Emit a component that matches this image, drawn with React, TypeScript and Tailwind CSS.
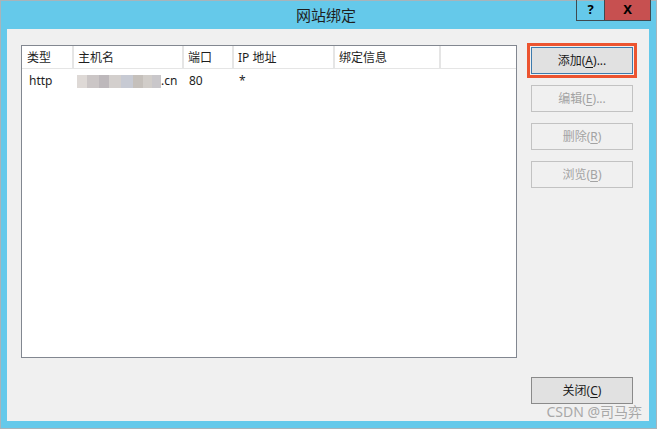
const font = { fontFamily: '"Noto Sans", "Noto Sans CJK SC", sans-serif' }

const columns = [
  { label: "类型", w: "w-[52px]", pl: "pl-[5px]" },
  { label: "主机名", w: "w-[110px]", pl: "pl-[4px]" },
  { label: "端口", w: "w-[50px]", pl: "pl-[4px]" },
  { label: "IP 地址", w: "w-[101px]", pl: "pl-[4px]" },
  { label: "绑定信息", w: "w-[106px]", pl: "pl-[4px]" },
]

function Key({ children }: { children: string }) {
  return <span className="underline underline-offset-2">{children}</span>
}

function SideButton({
  label,
  hotkey,
  dots,
  disabled,
  focused,
}: {
  label: string
  hotkey: string
  dots?: boolean
  disabled?: boolean
  focused?: boolean
}) {
  const base = "h-[27px] w-[102px] flex items-center justify-center text-[12px] border"
  const look = disabled
    ? "border-[#c2c2c2] bg-[#f0f0f0] text-[#a3a3a3]"
    : focused
      ? "border-[#3d7bad] bg-[#e1e1e1] text-[#1a1a1a] outline-[3px] outline-solid outline-[#ec5430] outline-offset-[1px]"
      : "border-[#8a8a8a] bg-[#e1e1e1] text-[#1a1a1a]"
  return (
    <div className={`${base} ${look}`}>
      {label}(<Key>{hotkey}</Key>){dots ? "..." : ""}
    </div>
  )
}

export default function App() {
  return (
    <div className="w-[657px] h-[429px] overflow-hidden bg-white" style={font}>
      <div className="relative w-[657px] h-[429px] border border-[#a8b4ba] bg-[#65c9ea] flex flex-col">
        {/* title bar */}
        <div className="h-[28px] grid grid-cols-[1fr_auto_1fr] pr-[5px]">
          <div />
          <div className="pt-[4px] text-[15px] leading-[20px] text-[#1e1e1e]">网站绑定</div>
          <div className="flex justify-end items-start">
            <div className="flex h-[21px] -mt-[1px] border border-t-0 border-[#3f4a50]">
              <div className="w-[28px] flex items-center justify-center text-[13px] font-bold text-black border-r border-[#3f4a50]">
                ?
              </div>
              <div className="w-[45px] flex items-center justify-center bg-[#c75050] text-[13px] font-bold text-black">
                X
              </div>
            </div>
          </div>
        </div>

        {/* content */}
        <div className="flex-1 ml-[6px] mr-[7px] mb-[7px] bg-[#f0f0f0] flex pl-[14px] pt-[16px] pr-[15px] pb-[17px]">
          <div className="w-[496px] h-[313px] border border-[#828790] bg-white">
            <div className="flex h-[23px] border-b border-[#e5e5e5]">
              {columns.map((c) => (
                <div
                  key={c.label}
                  className={`${c.w} ${c.pl} pt-[1px] border-r-2 border-[#e5e5e5] text-[12px] leading-[22px] text-[#1e1e1e]`}
                >
                  {c.label}
                </div>
              ))}
            </div>
            <div className="flex h-[22px] pt-[2px] items-center text-[12px] text-[#1e1e1e]">
              <div className="w-[52px] pl-[7px]">http</div>
              <div className="w-[110px] pl-[3px] flex items-center">
                <div className="flex h-[13px]">
                  <span className="w-[10px] bg-[#ded9d6]" />
                  <span className="w-[12px] bg-[#cbc6c6]" />
                  <span className="w-[10px] bg-[#bdb8bb]" />
                  <span className="w-[12px] bg-[#d3cfcd]" />
                  <span className="w-[12px] bg-[#c7cad3]" />
                  <span className="w-[10px] bg-[#c5c0bb]" />
                  <span className="w-[9px] bg-[#d1cdc9]" />
                  <span className="w-[9px] bg-[#c9c7ca]" />
                </div>
                <span>.cn</span>
              </div>
              <div className="w-[50px] pl-[5px]">80</div>
              <div className="w-[101px] pl-[5px]">*</div>
            </div>
          </div>

          <div className="ml-[14px] pt-[2px] flex flex-col">
            <div className="flex flex-col gap-[11px]">
              <SideButton label="添加" hotkey="A" dots focused />
              <SideButton label="编辑" hotkey="E" dots disabled />
              <SideButton label="删除" hotkey="R" disabled />
              <SideButton label="浏览" hotkey="B" disabled />
            </div>
            <div className="mt-auto">
              <SideButton label="关闭" hotkey="C" />
            </div>
          </div>
        </div>

        <div className="absolute right-[14px] bottom-[8px] text-[14px] leading-[16px] text-[#a8a8a8]">
          CSDN @司马弈
        </div>
      </div>
    </div>
  )
}
